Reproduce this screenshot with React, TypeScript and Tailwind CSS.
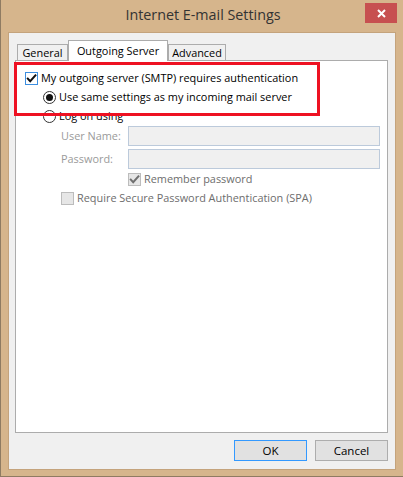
import React from "react";

const UI = "font-['Open_Sans',sans-serif]";

function CheckMark({ color }: { color: string }) {
  return (
    <svg width="11" height="11" viewBox="0 0 11 11" fill="none">
      <path
        d="M1.8 5.6L4.2 8.2L9.4 2.4"
        stroke={color}
        strokeWidth="2"
        strokeLinecap="square"
      />
    </svg>
  );
}

function Check({
  checked,
  disabled,
}: {
  checked: boolean;
  disabled?: boolean;
}) {
  return (
    <div
      className={
        disabled
          ? "w-[13px] h-[13px] shrink-0 border border-[#bcbcbc] bg-[#e6e6e6] flex items-center justify-center"
          : "w-[13px] h-[13px] shrink-0 border border-[#3c8ee0] bg-white flex items-center justify-center"
      }
    >
      {checked && <CheckMark color={disabled ? "#6f6f6f" : "#111111"} />}
    </div>
  );
}

function Radio({ selected }: { selected: boolean }) {
  return (
    <div className="w-[13px] h-[13px] shrink-0 rounded-full border border-[#333333] bg-white flex items-center justify-center">
      {selected && <div className="w-[7px] h-[7px] rounded-full bg-[#111111]" />}
    </div>
  );
}

function Tab({
  label,
  width,
  active,
}: {
  label: string;
  width: string;
  active?: boolean;
}) {
  if (active) {
    return (
      <div
        className={`${width} relative z-10 h-[21px] border border-b-0 border-[#acacac] bg-white flex items-center justify-center text-[10.9px] text-black leading-none whitespace-nowrap`}
      >
        {label}
      </div>
    );
  }
  return (
    <div
      className={`${width} h-[17px] pt-[1px] border border-b-0 border-[#acacac] bg-[#f0f0f0] flex items-center justify-center text-[10.9px] text-black leading-none whitespace-nowrap`}
    >
      {label}
    </div>
  );
}

export default function App() {
  return (
    <div
      className={`${UI} w-[403px] h-[477px] bg-[#d6b58c] border-l border-b border-[#8f7b62] flex flex-col pl-[7px] pr-[7px] pb-[6px]`}
    >
      {/* Title bar */}
      <div className="relative h-[32px] flex items-center justify-center">
        <span className="text-[14.3px] text-[#333333] leading-none pl-[2px] pb-[1px]">
          Internet E-mail Settings
        </span>
        <div className="absolute right-[-1px] top-[3px] w-[32px] h-[20px] bg-[#c75050] flex items-center justify-center">
          <svg width="9" height="9" viewBox="0 0 9 9">
            <path d="M1 1L8 8M8 1L1 8" stroke="white" strokeWidth="2" />
          </svg>
        </div>
      </div>

      {/* Dialog body */}
      <div className="relative flex-1 bg-[#f0f0f0] border border-[#c4a37c] flex flex-col pl-[6px] pr-[7px] pt-[7px] pb-[8px]">
        {/* Tabs */}
        <div className="flex items-end ml-[2px] -mb-px">
          <Tab label="General" width="w-[51px]" />
          <Tab label="Outgoing Server" width="w-[100px]" active />
          <Tab label="Advanced" width="w-[58px]" />
        </div>

        {/* Tab panel */}
        <div className="h-[373px] border border-[#acacac] bg-white flex flex-col pl-[9px] pr-[7px] text-[10.9px] leading-none">
          <div className="mt-[11px] h-[13px] flex items-center gap-[3px] text-black">
            <Check checked />
            <span>My outgoing server (SMTP) requires authentication</span>
          </div>
          <div className="mt-[6px] ml-[18px] h-[13px] flex items-center gap-[3px] text-black">
            <Radio selected />
            <span>Use same settings as my incoming mail server</span>
          </div>
          <div className="mt-[6px] ml-[18px] h-[13px] flex items-center gap-[3px] text-black">
            <Radio selected={false} />
            <span>Log on using</span>
          </div>

          <div className="mt-[3px] ml-[36px] h-[20px] flex items-center">
            <span className="w-[67px] text-[#9a9a9a]">User Name:</span>
            <div className="flex-1 h-[20px] border border-[#bccadb] bg-[#f0f0f0]" />
          </div>
          <div className="mt-[3px] ml-[36px] h-[20px] flex items-center">
            <span className="w-[67px] text-[#9a9a9a]">Password:</span>
            <div className="flex-1 h-[20px] border border-[#bccadb] bg-[#f0f0f0]" />
          </div>

          <div className="mt-[4px] ml-[103px] h-[13px] flex items-center gap-[3px] text-[#6d6d6d]">
            <Check checked disabled />
            <span>Remember password</span>
          </div>
          <div className="mt-[6px] ml-[36px] h-[13px] flex items-center gap-[3px] text-[#6d6d6d]">
            <Check checked={false} disabled />
            <span>Require Secure Password Authentication (SPA)</span>
          </div>
        </div>

        {/* Buttons */}
        <div className="mt-[7px] flex justify-end gap-[8px]">
          <button className="w-[73px] h-[21px] border border-[#3399ff] bg-[#e1e1e1] text-[11.5px] text-black leading-none">
            OK
          </button>
          <button className="w-[73px] h-[21px] border border-[#adadad] bg-[#e1e1e1] text-[11.5px] text-black leading-none">
            Cancel
          </button>
        </div>

        {/* Red annotation box */}
        <div className="absolute left-[5px] top-[29px] w-[306px] h-[54px] border-[3px] border-[#ee1122] pointer-events-none" />
      </div>
    </div>
  );
}
